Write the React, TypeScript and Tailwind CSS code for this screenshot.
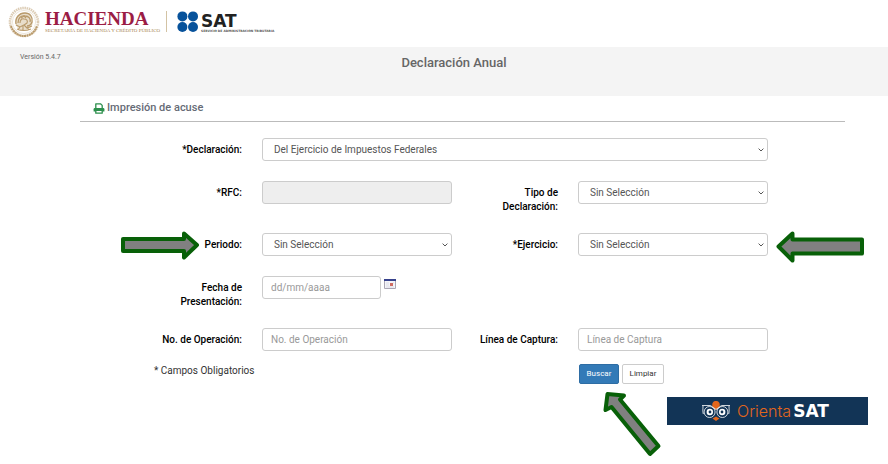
import type { ReactNode } from "react";

const fieldBox =
  "block h-[23px] w-full rounded-[3px] border border-[#ccc] text-[10px] leading-[14px] text-[#555] placeholder:text-[#999]";

function Label({ htmlFor, children }: { htmlFor: string; children: ReactNode }) {
  return (
    <label htmlFor={htmlFor} className="-mb-px block pt-[5px] text-right text-[10px] leading-[14px] font-medium text-black">
      {children}
    </label>
  );
}

function Select({ id, value }: { id: string; value: string }) {
  return (
    <div className="relative">
      <select id={id} className={`${fieldBox} appearance-none bg-white pr-5 pl-[11px]`}>
        <option>{value}</option>
      </select>
      <svg viewBox="0 0 6 4" className="pointer-events-none absolute top-[10px] right-1 h-1 w-[6px]" fill="none" stroke="#555" strokeWidth="1">
        <path d="M.6.6 3 3 5.4.6" />
      </svg>
    </div>
  );
}

function Crest() {
  return (
    <svg viewBox="0 0 32 32" className="size-8" fill="none" stroke="#b99a6b">
      <circle cx="16" cy="16" r="14" strokeWidth="2.6" strokeDasharray="1.5 .7" opacity=".5" />
      <circle cx="16" cy="16" r="11.6" strokeWidth=".5" opacity=".5" />
      <path d="M3 20c2 6 7 10 13 10s11-4 13-10" strokeWidth="2" strokeDasharray="2 .5" />
      <circle cx="16" cy="15.500" r="9" fill="#d9c7a6" stroke="none" opacity=".6" />
      <path d="M8 18c-1-6 3-11 9-11 5 0 8 4 7 9-1 3-3 4-5 4M10 17c0-5 3-8 7-7 4 0 6 3 5 6" strokeWidth="1.3" />
      <path d="M12 17c0-3 2-5 4-4 3 0 4 2 3 4l-3 2M8 19l4 2 4-2 3 3 5-2M9 23c4 2 9 2 14 0M13 12l3-2 2 2M12 21l-2 3M19 21l2 3M15 20v5" strokeWidth="1.1" />
    </svg>
  );
}

function Owl() {
  return (
    <svg viewBox="0 0 30 22" className="h-[22px] w-[30px]" fill="none">
      <path d="M11.500 6.500c-1-3.500 1-5.500 3.500-5.500s4.500 2 3.500 5.500L15 10z" fill="#e2661c" />
      <path d="M11.500 18.500 15 16.500l3.500 2L15 21z" fill="#e2661c" />
      <path d="M1 5.500h8.500l5.500 4 5.500-4H29M2 6c0 3-.5 5 .3 8M28 6c0 3 .5 5-.3 8" stroke="#fff" strokeWidth=".8" />
      <circle cx="8.600" cy="12" r="5.500" stroke="#fff" strokeWidth=".8" />
      <circle cx="21.400" cy="12" r="5.500" stroke="#fff" strokeWidth=".8" />
      <circle cx="8.800" cy="12" r="3.200" fill="#fff" />
      <circle cx="21.200" cy="12" r="3.200" fill="#fff" />
      <circle cx="9" cy="12" r="1.400" fill="#123456" />
      <circle cx="21" cy="12" r="1.400" fill="#123456" />
    </svg>
  );
}

function Printer() {
  return (
    <svg viewBox="0 0 12 11" className="h-[11px] w-3" fill="none" stroke="#2c8f4c" strokeWidth="1.3" strokeLinejoin="round">
      <path d="M2.800 5V.8h4.700L9.200 2.400V5" />
      <path d="M1.800 5h8.400q1.200 0 1.200 1.200v2.300H.6V6.200Q.6 5 1.800 5z" fill="#2c8f4c" stroke="none" />
      <path d="M2.800 7.300h6.400v2.900H2.800z" fill="#fff" />
    </svg>
  );
}

function CalendarIcon() {
  return (
    <svg viewBox="0 0 12 10" className="h-[10px] w-3">
      <path d="M.5.5h11v9H.5z" fill="#f4f4f8" stroke="#aaa6b4" />
      <path d="M0 0h12v2H0z" fill="#37428c" />
      <path d="M2 4h3M2 6h3M2 8h8M9 4h1" stroke="#dcdce6" />
      <path d="M6 4h3v3H6z" fill="#cf6b62" />
    </svg>
  );
}

export default function App() {
  return (
    <div className="relative bg-white font-[Roboto,'Liberation_Sans',sans-serif]">
      <header className="flex h-[47px] items-start pt-[6px] pl-2">
        <Crest />
        <div className="ml-[5px] w-[121px] pt-[3px] font-['Liberation_Serif',serif] whitespace-nowrap">
          <div className="text-[19px] leading-[19px] font-bold text-[#9b1c45]">HACIENDA</div>
          <div className="text-[5px] leading-[6px] text-[#a8844f]">SECRETARÍA DE HACIENDA Y CRÉDITO PÚBLICO</div>
        </div>
        <div className="mt-[5px] h-[21px] w-px bg-[#d3c3a4]" />
        <svg viewBox="0 0 22 22" className="mt-[5px] ml-[10px] size-[22px]" fill="#07529b">
          <circle cx="5.400" cy="5.400" r="5" />
          <circle cx="16" cy="5.400" r="5" />
          <circle cx="5.400" cy="16" r="5" />
          <circle cx="16" cy="16" r="5" />
        </svg>
        <div className="ml-[2px] pt-[8px] font-['DejaVu_Sans',sans-serif] whitespace-nowrap">
          <div className="text-[17px] leading-[15px] font-bold text-[#222]">SAT</div>
          <div className="text-[3px] leading-[4px] font-bold text-[#555]">SERVICIO DE ADMINISTRACIÓN TRIBUTARIA</div>
        </div>
      </header>

      <div className="grid h-[49px] grid-cols-[1fr_auto_1fr] bg-[#f4f4f4] pl-5">
        <span className="pt-[5px] text-[7px] leading-[10px] text-[#666]">Versión 5.4.7</span>
        <h1 className="pt-2 text-[13px] leading-4 font-medium text-[#666]">Declaración Anual</h1>
      </div>

      <main className="pr-[43px] pl-20">
        <h2 className="flex h-[26px] items-center gap-[2px] border-b border-[#bbb] pl-[13px] text-[11px] font-medium text-[#666b76]">
          <Printer />
          Impresión de acuse
        </h2>

        <form onSubmit={(e) => e.preventDefault()}>
          <div className="grid grid-cols-[162px_1fr_86px_1fr] gap-x-5 gap-y-5 pt-4 pr-[77px]">
            <Label htmlFor="declaracion">*Declaración:</Label>
            <div className="col-span-3">
              <Select id="declaracion" value="Del Ejercicio de Impuestos Federales" />
            </div>

            <Label htmlFor="rfc">*RFC:</Label>
            <input id="rfc" disabled className={`${fieldBox} bg-[#eee]`} />
            <Label htmlFor="tipo">
              Tipo de
              <br />
              Declaración:
            </Label>
            <Select id="tipo" value="Sin Selección" />

            <Label htmlFor="periodo">Periodo:</Label>
            <Select id="periodo" value="Sin Selección" />
            <Label htmlFor="ejercicio">*Ejercicio:</Label>
            <Select id="ejercicio" value="Sin Selección" />

            <Label htmlFor="fecha">
              Fecha de
              <br />
              Presentación:
            </Label>
            <div className="col-span-3 flex items-start gap-[3px]">
              <div className="w-[119px]">
                <input id="fecha" placeholder="dd/mm/aaaa" className={`${fieldBox} bg-white px-2`} />
              </div>
              <button type="button" aria-label="Calendario" className="pt-[3px]">
                <CalendarIcon />
              </button>
            </div>

            <Label htmlFor="operacion">No. de Operación:</Label>
            <input id="operacion" placeholder="No. de Operación" className={`${fieldBox} bg-white px-2`} />
            <Label htmlFor="captura">Línea de Captura:</Label>
            <input id="captura" placeholder="Línea de Captura" className={`${fieldBox} bg-white px-2`} />
          </div>

          <div className="grid grid-cols-[162px_1fr_86px_1fr] gap-x-5 pt-[13px] pr-[77px]">
            <p className="col-span-3 pl-[74px] text-[10px] leading-[14px] text-[#333]">* Campos Obligatorios</p>
            <div className="flex gap-[3px] pl-px text-[8px] leading-[18px]">
              <button type="submit" className="w-10 rounded-[2px] border border-[#2e6da4] bg-[#337ab7] text-white">
                Buscar
              </button>
              <button type="button" className="w-[42px] rounded-[2px] border border-[#ccc] bg-white text-[#333]">
                Limpiar
              </button>
            </div>
          </div>
        </form>
      </main>

      <footer className="flex justify-end pt-[13px] pr-5 pb-10">
        <div className="flex h-7 w-[201px] items-center bg-[#123456] pl-[34px]">
          <Owl />
          <span className="ml-[6px] font-[Inter,sans-serif] text-[16px] leading-4 font-light text-[#e2661c]">Orienta</span>
          <span className="ml-[2px] font-['DejaVu_Sans',sans-serif] text-[17px] leading-4 font-bold text-white">SAT</span>
        </div>
      </footer>

      <svg viewBox="0 0 80 30" className="pointer-events-none absolute top-[230px] left-[120px] h-[30px] w-20" fill="#808080" stroke="#086008" strokeWidth="4" strokeLinejoin="round">
        <path d="M3 9h61V3.500L77 15 64 27.500V21H3z" />
      </svg>
      <svg viewBox="0 0 90 34" className="pointer-events-none absolute top-[230px] left-[775px] h-[34px] w-[90px]" fill="#808080" stroke="#086008" strokeWidth="4" strokeLinejoin="round">
        <path d="M87 9.500H17.500V3.500L3.500 16.500 17.500 30.500V23.500H87z" />
      </svg>
      <svg viewBox="0 0 60 68" className="pointer-events-none absolute top-[390px] left-[602px] h-[68px] w-[60px]" fill="#808080" stroke="#086008" strokeWidth="4" strokeLinejoin="round">
        <path d="M5.500 4 22 5.500 18 9.500 56.500 56 48 64 9.500 17 3.500 20z" />
      </svg>
    </div>
  );
}
